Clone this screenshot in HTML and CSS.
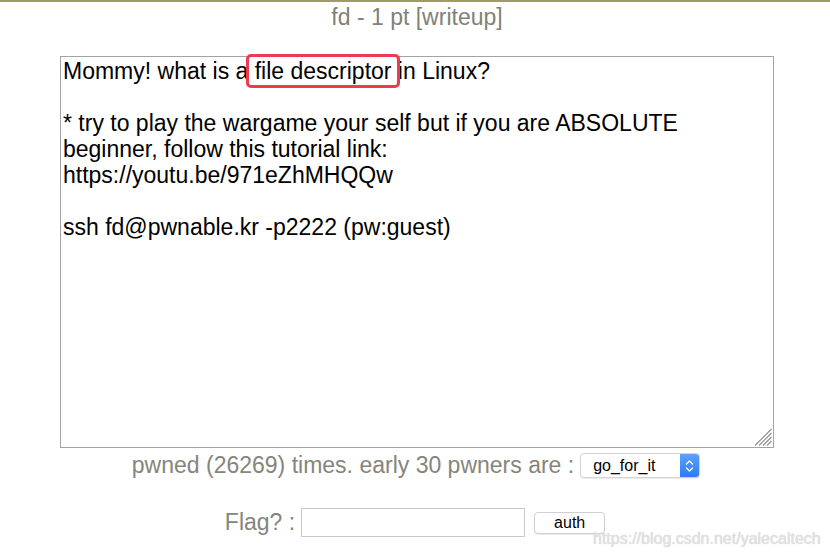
FILE: index.html
```html
<!DOCTYPE html>
<html>
<head>
<meta charset="utf-8">
<link rel="stylesheet" href="styles.css">
</head>
<body>
<div class="page">
  <h1 class="title">fd - 1 pt [writeup]</h1>
  <div class="box-wrap">
    <textarea class="desc" readonly>Mommy! what is a file descriptor in Linux?

* try to play the wargame your self but if you are ABSOLUTE beginner, follow this tutorial link:
https://youtu.be/971eZhMHQQw

ssh fd@pwnable.kr -p2222 (pw:guest)</textarea>
    <svg class="grip" width="18" height="18" viewBox="0 0 18 18">
      <path d="M1 17.5 L17.5 1 M5 17.5 L17.5 5 M9 17.5 L17.5 9 M13 17.5 L17.5 13" stroke="#8c8c8c" stroke-width="1.1" fill="none"/>
    </svg>
    <div class="mark"></div>
  </div>
  <div class="row pwned">
    <span class="label">pwned (26269) times. early 30 pwners are :</span>
    <div class="select">
      <span class="sel-text">go_for_it</span>
      <span class="sel-btn">
        <svg width="9" height="14" viewBox="0 0 9 14"><path d="M1.5 5 L4.5 2 L7.5 5 M1.5 9 L4.5 12 L7.5 9" fill="none" stroke="#fff" stroke-width="1.3" stroke-linecap="round" stroke-linejoin="round"/></svg>
      </span>
    </div>
  </div>
  <div class="row flag">
    <span class="label">Flag? :</span>
    <input class="flag-input" type="text">
    <button class="auth">auth</button>
  </div>
  <div class="watermark">https://blog.csdn.net/yalecaltech</div>
</div>
</body>
</html>
```
FILE: styles.css
```css
html, body {
  margin: 0;
  padding: 0;
  background: #fff;
}
body {
  font-family: "Liberation Sans", Arial, Helvetica, sans-serif;
}
.page {
  position: relative;
  width: 830px;
  height: 554px;
  border-top: 2px solid #9e9c63;
  box-sizing: border-box;
  display: flex;
  flex-direction: column;
  align-items: center;
  overflow: hidden;
}
.title {
  margin: 2px 0 0 0;
  font-size: 23px;
  font-weight: normal;
  color: #818177;
  line-height: 26px;
  padding-left: 4px;
}
.box-wrap {
  position: relative;
  margin-top: 26px;
  margin-left: 4px;
}
.desc {
  display: block;
  width: 714px;
  height: 392px;
  box-sizing: border-box;
  border: 1px solid #a3a3a3;
  padding: 1px 2px;
  margin: 0;
  font-family: "Liberation Sans", Arial, Helvetica, sans-serif;
  font-size: 23px;
  line-height: 26px;
  color: #000;
  resize: none;
  outline: none;
  overflow: hidden;
}
.grip {
  position: absolute;
  right: 2px;
  bottom: 2px;
}
.mark {
  position: absolute;
  left: 186px;
  top: -2px;
  width: 154px;
  height: 34px;
  box-sizing: border-box;
  border: 3px solid #ee3a4e;
  border-radius: 5px;
}
.row {
  display: flex;
  align-items: center;
}
.pwned {
  margin-top: 4px;
  margin-left: 2px;
}
.label {
  font-size: 23px;
  color: #85857b;
}
.pwned .label {
  margin-right: 6px;
}
.select {
  display: flex;
  align-items: stretch;
  width: 120px;
  height: 25px;
  box-sizing: border-box;
  border: 1px solid #d3d3d3;
  border-radius: 4px;
  background: #fff;
  overflow: hidden;
  box-shadow: 0 1px 1px rgba(0,0,0,0.08);
}
.sel-text {
  flex: 1;
  font-size: 16px;
  color: #000;
  padding-left: 12px;
  line-height: 24px;
}
.sel-btn {
  width: 19px;
  background: linear-gradient(#5aa2fb, #2f7bf0);
  display: flex;
  align-items: center;
  justify-content: center;
}
.flag {
  margin-top: 29px;
  margin-left: 0;
}
.flag .label {
  margin-right: 6px;
}
.flag-input {
  width: 224px;
  height: 29px;
  box-sizing: border-box;
  border: 1px solid #c9c9c9;
  margin: 0;
  padding: 0;
}
.auth {
  margin-left: 9px;
  width: 71px;
  height: 22px;
  box-sizing: border-box;
  border: 1px solid #d0d0d0;
  border-radius: 4px;
  background: #fff;
  font-family: "Liberation Sans", Arial, Helvetica, sans-serif;
  font-size: 16px;
  color: #000;
  padding: 0;
  box-shadow: 0 1px 1px rgba(0,0,0,0.08);
}
.watermark {
  position: absolute;
  left: 593px;
  top: 528px;
  font-size: 16px;
  color: #e2e2e2;
  text-shadow: 0 0 1px #c8c8c8;
}
```
